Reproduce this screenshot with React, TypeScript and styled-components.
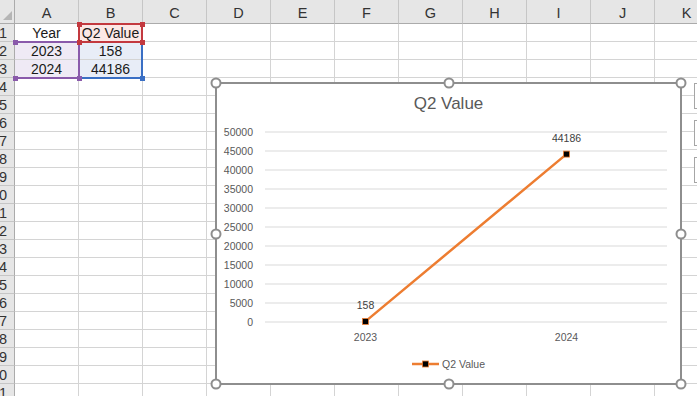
import React from "react";
import styled, { createGlobalStyle } from "styled-components";

type Tint = "purple" | "red" | "blue";

const COLS = ["A", "B", "C", "D", "E", "F", "G", "H", "I", "J", "K"];
const ROW_COUNT = 21;

const cells: Record<string, { text: string; tint?: Tint }> = {
  A1: { text: "Year" },
  B1: { text: "Q2 Value", tint: "red" },
  A2: { text: "2023", tint: "purple" },
  B2: { text: "158", tint: "blue" },
  A3: { text: "2024", tint: "purple" },
  B3: { text: "44186", tint: "blue" },
};

const tints: Record<Tint, string> = {
  purple: "#efeaf5",
  red: "#fce8e6",
  blue: "#e8edf7",
};

const lineColors: Record<Tint, string> = {
  purple: "#8a5aab",
  red: "#c3393f",
  blue: "#3a6fc4",
};

// chart data ranges drawn over the grid
const ranges: { color: Tint; x: number; y: number; w: number; h: number; noLeft?: boolean }[] = [
  { color: "blue", x: 78, y: 41, w: 65, h: 38 },
  { color: "purple", x: 14, y: 41, w: 66, h: 38, noLeft: true },
  { color: "red", x: 78, y: 23, w: 65, h: 20 },
];

const series = [
  { year: "2023", value: 158 },
  { year: "2024", value: 44186 },
];
const ticks = [0, 5000, 10000, 15000, 20000, 25000, 30000, 35000, 40000, 45000, 50000];

// plot geometry (svg coords)
const PLOT_LEFT = 48;
const PLOT_RIGHT = 450;
const PLOT_BOTTOM = 198;
const PLOT_HEIGHT = 190;
const MAX = 50000;
const yOf = (v: number) => PLOT_BOTTOM - (v / MAX) * PLOT_HEIGHT;
const xOf = (i: number) =>
  PLOT_LEFT + ((PLOT_RIGHT - PLOT_LEFT) / series.length) * (i + 0.5);

const handles = [
  [0, 0], [50, 0], [100, 0],
  [0, 50], [100, 50],
  [0, 100], [50, 100], [100, 100],
];

function App() {
  const points = series.map((d, i) => ({ ...d, x: xOf(i), y: yOf(d.value) }));
  return (
    <>
      <GlobalStyle />
      <Sheet>
        <Grid>
          <Corner />
          {COLS.map((c) => (
            <ColHeader key={c}>{c}</ColHeader>
          ))}
          {Array.from({ length: ROW_COUNT }, (_, r) => (
            <React.Fragment key={r}>
              <RowHeader>{r + 1}</RowHeader>
              {COLS.map((c) => {
                const cell = cells[`${c}${r + 1}`];
                return (
                  <Cell key={c} $tint={cell?.tint}>
                    {cell?.text}
                  </Cell>
                );
              })}
            </React.Fragment>
          ))}
        </Grid>

        {ranges.map((r) => (
          <RangeBox
            key={r.color}
            $color={lineColors[r.color]}
            $x={r.x}
            $y={r.y}
            $w={r.w}
            $h={r.h}
            $noLeft={r.noLeft}
          >
            <RangeDot $color={lineColors[r.color]} $right={false} $bottom={false} />
            <RangeDot $color={lineColors[r.color]} $right $bottom={false} />
            <RangeDot $color={lineColors[r.color]} $right={false} $bottom />
            <RangeDot $color={lineColors[r.color]} $right $bottom />
          </RangeBox>
        ))}

        <ChartWrap>
          <ChartFrame>
            <ChartTitle>Q2 Value</ChartTitle>
            <svg width="463" height="222" style={{ display: "block" }}>
              {ticks.map((t) => (
                <g key={t}>
                  <line
                    x1={PLOT_LEFT}
                    x2={PLOT_RIGHT}
                    y1={yOf(t)}
                    y2={yOf(t)}
                    stroke="#d9d9d9"
                    strokeWidth="1"
                  />
                  <text
                    x={36}
                    y={yOf(t) + 3.8}
                    textAnchor="end"
                    fontSize="10.5"
                    fill="#595959"
                    fontFamily="Liberation Sans, Arial, sans-serif"
                  >
                    {t}
                  </text>
                </g>
              ))}
              {points.map((p) => (
                <text
                  key={p.year}
                  x={p.x}
                  y={PLOT_BOTTOM + 19}
                  textAnchor="middle"
                  fontSize="10.5"
                  fill="#595959"
                  fontFamily="Liberation Sans, Arial, sans-serif"
                >
                  {p.year}
                </text>
              ))}
              <polyline
                points={points.map((p) => `${p.x},${p.y}`).join(" ")}
                fill="none"
                stroke="#ed7d31"
                strokeWidth="2.5"
                strokeLinecap="round"
              />
              {points.map((p) => (
                <g key={p.year + "m"}>
                  <rect
                    x={p.x - 3}
                    y={p.y - 3}
                    width="6"
                    height="6"
                    fill="#000"
                    stroke="#ed7d31"
                    strokeWidth="0.8"
                  />
                  <text
                    x={p.x}
                    y={p.y - 12}
                    textAnchor="middle"
                    fontSize="10.5"
                    fill="#404040"
                    fontFamily="Liberation Sans, Arial, sans-serif"
                  >
                    {p.value}
                  </text>
                </g>
              ))}
            </svg>
            <Legend>
              <svg width="27" height="8">
                <line x1="0" x2="27" y1="4" y2="4" stroke="#ed7d31" strokeWidth="2.5" />
                <rect x="10.5" y="1" width="6" height="6" fill="#000" stroke="#ed7d31" strokeWidth="0.8" />
              </svg>
              <span>Q2 Value</span>
            </Legend>
          </ChartFrame>
          {handles.map(([x, y]) => (
            <Handle key={`${x}-${y}`} $x={x} $y={y} />
          ))}
        </ChartWrap>

        <SideButtons>
          <SideButton />
          <SideButton />
          <SideButton />
        </SideButtons>
      </Sheet>
    </>
  );
}

export default App;

const GlobalStyle = createGlobalStyle`
  body {
    margin: 0;
    background: #ffffff;
    font-family: "Liberation Sans", Arial, sans-serif;
  }
`;

const Sheet = styled.div`
  position: relative;
  width: 697px;
  height: 396px;
  overflow: hidden;
  background: #ffffff;
`;

const Grid = styled.div`
  display: grid;
  grid-template-columns: 15px repeat(11, 64px);
  grid-template-rows: 24px repeat(21, 18px);
  font-size: 14px;
`;

const Corner = styled.div`
  position: relative;
  background: #e6e6e6;
  border-right: 1px solid #ababab;
  border-bottom: 1px solid #ababab;
  &::after {
    content: "";
    position: absolute;
    right: 2px;
    bottom: 3px;
    border-style: solid;
    border-width: 0 0 9px 9px;
    border-color: transparent transparent #b5b5b5 transparent;
  }
`;

const ColHeader = styled.div`
  display: flex;
  align-items: center;
  justify-content: center;
  padding-top: 2px;
  background: #e6e6e6;
  color: #333333;
  font-size: 14.5px;
  border-right: 1px solid #c6c6c6;
  border-bottom: 1px solid #ababab;
`;

const RowHeader = styled.div`
  overflow: hidden;
  white-space: nowrap;
  text-align: right;
  padding-right: 7px;
  line-height: 18px;
  background: #e6e6e6;
  color: #333333;
  font-size: 14.5px;
  border-right: 1px solid #ababab;
  border-bottom: 1px solid #c6c6c6;
  display: flex;
  justify-content: flex-end;
  align-items: center;
`;

const Cell = styled.div<{ $tint?: Tint }>`
  display: flex;
  align-items: center;
  justify-content: center;
  background: ${(p) => (p.$tint ? tints[p.$tint] : "#ffffff")};
  color: #1a1a1a;
  white-space: nowrap;
  border-right: 1px solid #d4d4d4;
  border-bottom: 1px solid #d4d4d4;
`;

const RangeBox = styled.div<{
  $color: string;
  $x: number;
  $y: number;
  $w: number;
  $h: number;
  $noLeft?: boolean;
}>`
  position: absolute;
  left: ${(p) => p.$x}px;
  top: ${(p) => p.$y}px;
  width: ${(p) => p.$w}px;
  height: ${(p) => p.$h}px;
  box-sizing: border-box;
  border: 2px solid ${(p) => p.$color};
  ${(p) => (p.$noLeft ? "border-left-color: transparent;" : "")}
  pointer-events: none;
`;

const RangeDot = styled.div<{ $color: string; $right: boolean; $bottom: boolean }>`
  position: absolute;
  width: 5px;
  height: 5px;
  background: ${(p) => p.$color};
  ${(p) => (p.$right ? "right: -3.5px;" : "left: -3.5px;")}
  ${(p) => (p.$bottom ? "bottom: -3.5px;" : "top: -3.5px;")}
`;

const ChartWrap = styled.div`
  position: absolute;
  left: 215px;
  top: 82px;
  width: 467px;
  height: 303px;
`;

const ChartFrame = styled.div`
  box-sizing: border-box;
  width: 100%;
  height: 100%;
  background: #ffffff;
  border: 2px solid #8e8e8e;
  display: flex;
  flex-direction: column;
`;

const ChartTitle = styled.div`
  height: 40px;
  padding-top: 10px;
  box-sizing: border-box;
  text-align: center;
  font-size: 17px;
  line-height: 20px;
  color: #595959;
`;

const Legend = styled.div`
  margin-top: 9px;
  height: 18px;
  display: flex;
  align-items: center;
  justify-content: center;
  gap: 3px;
  font-size: 10.5px;
  color: #595959;
  svg {
    display: block;
  }
`;

const Handle = styled.div<{ $x: number; $y: number }>`
  position: absolute;
  left: calc(${(p) => p.$x}% + ${(p) => 1 - p.$x / 50}px);
  top: calc(${(p) => p.$y}% + ${(p) => 1 - p.$y / 50}px);
  width: 11px;
  height: 11px;
  box-sizing: border-box;
  border-radius: 50%;
  border: 2px solid #8e8e8e;
  background: #ffffff;
  transform: translate(-50%, -50%);
`;

const SideButtons = styled.div`
  position: absolute;
  left: 694px;
  top: 83px;
  display: flex;
  flex-direction: column;
  gap: 11px;
`;

const SideButton = styled.div`
  width: 26px;
  height: 26px;
  box-sizing: border-box;
  background: #ffffff;
  border: 1px solid #a6a6a6;
`;
